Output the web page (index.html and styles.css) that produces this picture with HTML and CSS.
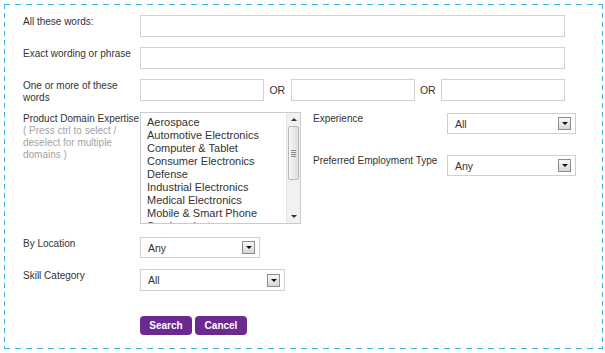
FILE: index.html
```html
<!DOCTYPE html>
<html lang="en">
<head>
    <meta charset="UTF-8">
    <meta name="viewport" content="width=device-width, initial-scale=1.0">
    <title>Advanced Search</title>
    <link rel="stylesheet" href="styles.css">
</head>
<body>
    <form class="search-box">
        <div class="row">
            <label class="field-label" for="all-words">All these words:</label>
            <input class="text-input wide" id="all-words" type="text">
        </div>
        <div class="row">
            <label class="field-label" for="exact">Exact wording or phrase</label>
            <input class="text-input wide" id="exact" type="text">
        </div>
        <div class="row row-words">
            <label class="field-label" for="any-1">One or more of these words</label>
            <div class="any-words">
                <input class="text-input short" id="any-1" type="text">
                <span class="or">OR</span>
                <input class="text-input short" type="text">
                <span class="or">OR</span>
                <input class="text-input short" type="text">
            </div>
        </div>
        <div class="row row-domain">
            <div class="field-label">
                <span class="label-title">Product Domain Expertise</span>
                <span class="hint">( Press ctrl to select / deselect for multiple domains )</span>
            </div>
            <div class="listbox">
                <ul class="options">
                    <li>Aerospace</li>
                    <li>Automotive Electronics</li>
                    <li>Computer &amp; Tablet</li>
                    <li>Consumer Electronics</li>
                    <li>Defense</li>
                    <li>Industrial Electronics</li>
                    <li>Medical Electronics</li>
                    <li>Mobile &amp; Smart Phone</li>
                    <li>Semiconductors</li>
                </ul>
                <div class="scrollbar">
                    <span class="scroll-arrow up"></span>
                    <span class="thumb"><span class="grip"></span></span>
                    <span class="track"></span>
                    <span class="scroll-arrow down"></span>
                </div>
            </div>
            <div class="side-fields">
                <div class="side-row">
                    <span class="side-label">Experience</span>
                    <div class="dropdown dd-side">All<span class="drop-btn"></span></div>
                </div>
                <div class="side-row">
                    <span class="side-label">Preferred Employment Type</span>
                    <div class="dropdown dd-side">Any<span class="drop-btn"></span></div>
                </div>
            </div>
        </div>
        <div class="row row-location">
            <span class="field-label">By Location</span>
            <div class="dropdown dd-location">Any<span class="drop-btn"></span></div>
        </div>
        <div class="row row-skill">
            <span class="field-label">Skill Category</span>
            <div class="dropdown dd-skill">All<span class="drop-btn"></span></div>
        </div>
        <div class="actions">
            <button class="btn" type="button">Search</button>
            <button class="btn" type="button">Cancel</button>
        </div>
    </form>
</body>
</html>
```

FILE: styles.css
```css
body {
    margin: 0;
    font-family: "Liberation Sans", Arial, sans-serif;
    font-size: 10px;
    color: #333;
    background-color: #fff;
}
.search-box {
    box-sizing: border-box;
    width: 599px;
    height: 345px;
    margin: 4px 0 0 4px;
    padding: 11px 0 0 19px;
    background:
        repeating-linear-gradient(90deg, #3fb3dc 0 6px, transparent 6px 11px) 0 0 / 100% 1px no-repeat,
        repeating-linear-gradient(90deg, #3fb3dc 0 6px, transparent 6px 11px) 0 100% / 100% 1px no-repeat,
        repeating-linear-gradient(180deg, #3fb3dc 0 5px, transparent 5px 9px) 0 0 / 1px 100% no-repeat,
        repeating-linear-gradient(180deg, #3fb3dc 0 5px, transparent 5px 9px) 100% 0 / 1px 100% no-repeat;
}
.row {
    display: flex;
    align-items: flex-start;
    margin-bottom: 10px;
}
.row-words {
    margin-bottom: 8px;
}
.row-domain {
    margin-bottom: 13px;
}
.row-location {
    margin-bottom: 11px;
}
.row-skill {
    margin-bottom: 25px;
}
.field-label {
    width: 117px;
    flex-shrink: 0;
    line-height: 12px;
    padding-top: 1px;
}
.label-title {
    display: block;
    white-space: nowrap;
}
.hint {
    display: block;
    color: #a3a3a3;
    padding-right: 10px;
}
.text-input {
    box-sizing: border-box;
    height: 22px;
    margin: 0;
    padding: 0 4px;
    border: 1px solid #d2d2d2;
    font: 11px "Liberation Sans", Arial, sans-serif;
    color: #333;
}
.wide {
    width: 425px;
}
.short {
    width: 124px;
}
.any-words {
    display: flex;
    align-items: center;
    justify-content: space-between;
    width: 425px;
}
.or {
    font-size: 10.5px;
}

/* multi select list */
.listbox {
    box-sizing: border-box;
    width: 161px;
    height: 112px;
    border: 1px solid #cbcbcb;
    display: flex;
    overflow: hidden;
}
.options {
    flex: 1;
    list-style: none;
    margin: 0;
    padding: 3px 0 0 6px;
    font-size: 11px;
    line-height: 13px;
    color: #333;
    overflow: hidden;
    white-space: nowrap;
}
.scrollbar {
    width: 13px;
    display: flex;
    flex-direction: column;
    align-items: center;
    background-color: #f1f1f1;
    border-left: 1px solid #e6e6e6;
}
.scroll-arrow {
    height: 13px;
    width: 100%;
    display: flex;
    align-items: center;
    justify-content: center;
}
.scroll-arrow.up::after {
    content: "";
    border-left: 3px solid transparent;
    border-right: 3px solid transparent;
    border-bottom: 3px solid #333;
}
.scroll-arrow.down::after {
    content: "";
    border-left: 3px solid transparent;
    border-right: 3px solid transparent;
    border-top: 3px solid #333;
}
.thumb {
    box-sizing: border-box;
    width: 11px;
    height: 54px;
    border: 1px solid #b9b9b9;
    border-radius: 2px;
    background: linear-gradient(90deg, #f7f7f7, #dedede);
    display: flex;
    align-items: center;
    justify-content: center;
}
.grip {
    width: 5px;
    height: 7px;
    background: repeating-linear-gradient(180deg, #8a8a8a 0 1px, transparent 1px 2px);
}
.track {
    flex: 1;
}

/* right hand fields */
.side-fields {
    display: flex;
    flex-direction: column;
    gap: 21px;
    margin-left: 12px;
    padding-top: 1px;
}
.side-row {
    display: flex;
    align-items: flex-start;
}
.side-label {
    width: 134px;
    line-height: 12px;
}

/* dropdowns */
.dropdown {
    box-sizing: border-box;
    height: 21px;
    border: 1px solid #cfcfcf;
    display: flex;
    align-items: center;
    justify-content: space-between;
    padding: 0 4px 0 7px;
    font-size: 10.5px;
    color: #333;
}
.dd-side {
    width: 129px;
}
.dd-location {
    width: 120px;
}
.dd-skill {
    width: 145px;
    height: 22px;
}
.drop-btn {
    box-sizing: border-box;
    width: 13px;
    height: 13px;
    border: 1px solid #8c8c8c;
    background: linear-gradient(#f9f9f9, #d6d6d6);
    display: flex;
    align-items: center;
    justify-content: center;
}
.drop-btn::after {
    content: "";
    border-left: 3px solid transparent;
    border-right: 3px solid transparent;
    border-top: 3px solid #111;
}

.actions {
    display: flex;
    gap: 3px;
    margin-left: 117px;
}
.btn {
    width: 52px;
    height: 19px;
    padding: 0;
    border: none;
    border-radius: 4px;
    background-color: #6a2a8f;
    color: #fff;
    font: bold 10px "Liberation Sans", Arial, sans-serif;
    cursor: pointer;
}
```
